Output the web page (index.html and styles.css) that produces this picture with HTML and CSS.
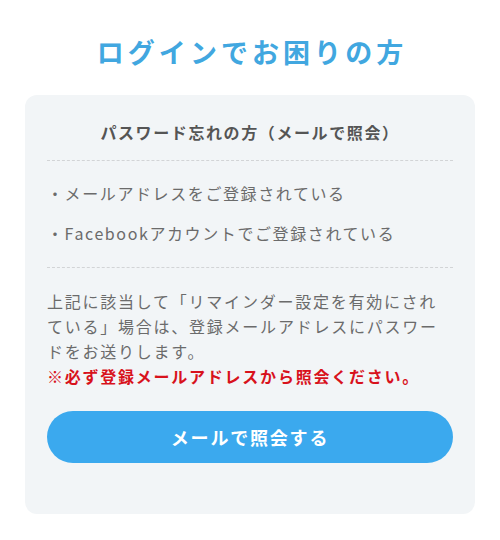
FILE: index.html
```html
<!DOCTYPE html>
<html lang="ja">
<head>
    <meta charset="UTF-8">
    <meta name="viewport" content="width=device-width, initial-scale=1.0">
    <title>ログインでお困りの方</title>
    <link rel="stylesheet" href="styles.css">
</head>
<body>

    <div class="page">
        <h1 class="title">ログインでお困りの方</h1>

        <div class="card">
            <h2 class="card-title">パスワード忘れの方（メールで照会）</h2>
            <ul class="conditions">
                <li>・メールアドレスをご登録されている</li>
                <li>・Facebookアカウントでご登録されている</li>
            </ul>
            <p class="note">
                上記に該当して「リマインダー設定を有効にされている」場合は、登録メールアドレスにパスワードをお送りします。<br>
                <strong class="warning">※必ず登録メールアドレスから照会ください。</strong>
            </p>
            <a class="mail-btn" href="#">メールで照会する</a>
        </div>
    </div>

</body>
</html>
```

FILE: styles.css
```css
body {
    margin: 0;
    font-family: "Noto Sans CJK JP", "Noto Sans", sans-serif;
    background-color: #fff;
    color: #6b6b6b;
}

.page {
    padding: 0 25px;
}

.title {
    margin: 0;
    padding: 34px 0 0 0.15em;
    font-size: 27px;
    line-height: 36px;
    letter-spacing: 0.15em;
    text-align: center;
    color: #41a7e0;
}

.card {
    margin-top: 25px;
    padding: 25px 22px 51px;
    background-color: #f2f5f7;
    border-radius: 12px;
}

.card-title {
    margin: 0 0 16px;
    font-size: 16px;
    line-height: 24px;
    letter-spacing: 0.1em;
    text-align: center;
    color: #555;
}

.conditions {
    list-style: none;
    margin: 0;
    padding: 20px 0 22px;
    border-top: 1px dashed #d2d4d6;
    border-bottom: 1px dashed #d2d4d6;
}

.conditions li {
    font-size: 16px;
    line-height: 24px;
    letter-spacing: 0.1em;
}

.conditions li + li {
    margin-top: 16px;
}

.note {
    margin: 21px 0 0;
    font-size: 16px;
    line-height: 25px;
    letter-spacing: 0.11em;
}

.warning {
    color: #d8121c;
}

.mail-btn {
    display: block;
    margin-top: 22px;
    height: 52px;
    line-height: 52px;
    border-radius: 26px;
    background-color: #3ba9ee;
    color: #fff;
    font-size: 18px;
    font-weight: bold;
    letter-spacing: 0.1em;
    text-align: center;
    text-decoration: none;
}
```
